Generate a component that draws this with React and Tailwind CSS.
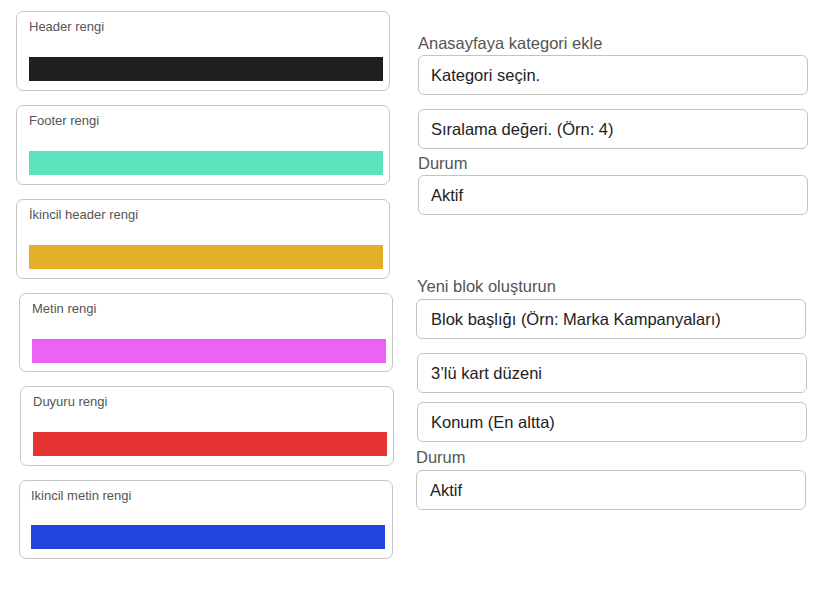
import React from "react";

const cards = [
  { label: "Header rengi", color: "bg-[#1f1f1f]", cls: "ml-0 pl-[12px] h-[80px]", bar: "mt-[23px]" },
  { label: "Footer rengi", color: "bg-[#5be3bb]", cls: "ml-0 pl-[12px] h-[80px]", bar: "mt-[23px]" },
  { label: "İkincil header rengi", color: "bg-[#e3b027]", cls: "ml-0 pl-[12px] h-[80px]", bar: "mt-[23px]" },
  { label: "Metin rengi", color: "bg-[#eb63f3]", cls: "ml-[3px] pl-[12px] h-[79px]", bar: "mt-[23px]" },
  { label: "Duyuru rengi", color: "bg-[#e63434]", cls: "ml-[4px] pl-[12px] h-[80px]", bar: "mt-[23px]" },
  { label: "Ikincil metin rengi", color: "bg-[#2445dd]", cls: "ml-[3px] pl-[11px] h-[79px]", bar: "mt-[22px]" },
];

function Card({ label, color, cls, bar }) {
  return (
    <div className={`w-[374px] border border-[#c6c6c6] rounded-[7px] pt-[7px] flex flex-col ${cls}`}>
      <div className="text-[13px] leading-[15px] text-[#555555]">{label}</div>
      <div className={`w-[354px] h-[24px] ${bar} ${color}`} />
    </div>
  );
}

function Box({ children, cls = "" }) {
  return (
    <div className={`w-[390px] h-[40px] border border-[#c4c4c4] rounded-[6px] flex items-center text-[16.5px] text-[#222222] ${cls}`}>
      {children}
    </div>
  );
}

function Label({ children, cls = "" }) {
  return <div className={`text-[16.5px] leading-[18px] text-[#555555] ${cls}`}>{children}</div>;
}

export default function App() {
  return (
    <div className="w-[818px] h-[596px] bg-white flex font-['Liberation_Sans',Arial,sans-serif] overflow-hidden">
      <div className="pl-[16px] pt-[11px] flex flex-col gap-[14px] w-[402px] shrink-0">
        {cards.map((c) => (
          <Card key={c.label} {...c} />
        ))}
      </div>
      <div className="flex flex-col pt-[34px]">
        <div className="flex flex-col pl-[16px]">
          <Label>Anasayfaya kategori ekle</Label>
          <Box cls="mt-[3px] pl-[12px]">Kategori seçin.</Box>
          <Box cls="mt-[14px] pl-[12px]">Sıralama değeri. (Örn: 4)</Box>
          <Label cls="mt-[5px]">Durum</Label>
          <Box cls="mt-[3px] pl-[12px]">Aktif</Box>
        </div>
        <div className="flex flex-col pl-[14px] mt-[62px]">
          <Label cls="ml-[1px]">Yeni blok oluşturun</Label>
          <Box cls="mt-[4px] pl-[14px]">Blok başlığı (Örn: Marka Kampanyaları)</Box>
          <Box cls="mt-[14px] ml-[1px] pl-[13px]">3’lü kart düzeni</Box>
          <Box cls="mt-[9px] ml-[1px] pl-[13px]">Konum (En altta)</Box>
          <Label cls="mt-[6px]">Durum</Label>
          <Box cls="mt-[4px] pl-[13px]">Aktif</Box>
        </div>
      </div>
    </div>
  );
}
